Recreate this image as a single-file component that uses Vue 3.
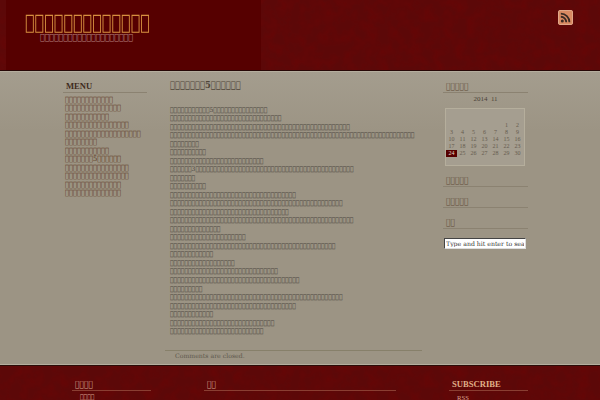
<script setup>
const B = '\uE000'
const box = (n) => B.repeat(n)
const mix = (...parts) => parts.map((p) => (typeof p === 'number' ? box(p) : p)).join('')

const menu = [12, 14, 11, 16, 19, 8, 11, [7, '5', 6], 16, 16, 14, 14].map((m) =>
  Array.isArray(m) ? mix(...m) : box(m)
)
const lines = [
  [11, '5', 15], [31], [50], [68], [8], [10], [26], [6, '3', 44], [7], [10], [35],
  [48], [33], [51], [14], [21], [46], [12], [18], [30], [36], [9], [48], [35], [12], [29], [26]
].map((l) => mix(...l))
const days = ['', '', '', '', '', '1', '2', '3', '4', '5', '6', '7', '8', '9', '10', '11', '12', '13', '14', '15', '16', '17', '18', '19', '20', '21', '22', '23', '24', '25', '26', '27', '28', '29', '30']
</script>

<template>
  <div class="page">
    <header class="top">
      <div class="brand">
        <h1>{{ box(13) }}</h1>
        <p>{{ box(20) }}</p>
      </div>
      <a class="rss" aria-label="RSS">
        <svg viewBox="0 0 16 16" width="15" height="15">
          <rect x="0.5" y="0.5" width="15" height="15" rx="1.5" fill="#d98a62" stroke="#e8b090" />
          <circle cx="4.6" cy="11.6" r="1.6" fill="#3a2a24" />
          <path d="M3 7.2a5.8 5.8 0 0 1 5.8 5.8M3 3.8A9.2 9.2 0 0 1 12.2 13" fill="none" stroke="#3a2a24" stroke-width="1.9" />
        </svg>
      </a>
    </header>

    <main class="body">
      <aside class="left">
        <h3 class="menu-head">MENU</h3>
        <ul>
          <li v-for="(m, i) in menu" :key="i">{{ m }}</li>
        </ul>
      </aside>

      <article class="post">
        <h2>{{ mix(7, '5', 6) }}</h2>
        <div class="copy">
          <div v-for="(l, i) in lines" :key="i">{{ l }}</div>
        </div>
        <p class="closed">Comments are closed.</p>
      </article>

      <aside class="right">
        <h3 class="side-head">{{ box(5) }}</h3>
        <div class="cal-title">2014&nbsp;&nbsp;11</div>
        <div class="cal">
          <span v-for="(d, i) in days" :key="i" :class="{ today: d === '24' }">{{ d }}</span>
        </div>
        <h3 class="side-head next">{{ box(5) }}</h3>
        <h3 class="side-head next">{{ box(5) }}</h3>
        <h3 class="side-head next">{{ box(2) }}</h3>
        <input class="search" value="Type and hit enter to search" />
      </aside>
    </main>

    <footer class="bottom">
      <section class="f1">
        <h4>{{ box(4) }}</h4>
        <div class="item">{{ box(4) }}</div>
      </section>
      <section class="f2">
        <h4>{{ box(2) }}</h4>
      </section>
      <section class="f3">
        <h4>SUBSCRIBE</h4>
        <div class="item">RSS</div>
      </section>
    </footer>
  </div>
</template>

<style>
html, body { margin: 0; background: #9c9484; }
</style>

<style scoped>
.page {
  width: 600px;
  height: 400px;
  overflow: hidden;
  display: flex;
  flex-direction: column;
  background: #9c9484;
  font-family: "DejaVu Serif Condensed", "DejaVu Serif", serif;
  font-stretch: condensed;
}
.top, .bottom {
  background-color: #5c0808;
  background-image: url("data:image/svg+xml,%3Csvg xmlns='http://www.w3.org/2000/svg' width='600' height='120'%3E%3Cfilter id='n'%3E%3CfeTurbulence type='fractalNoise' baseFrequency='0.09' numOctaves='3' seed='4'/%3E%3CfeColorMatrix values='0 0 0 0 0.2 0 0 0 0 0 0 0 0 0 0 0 0 0 0.55 -0.2'/%3E%3C/filter%3E%3Crect width='600' height='120' filter='url(%23n)'/%3E%3C/svg%3E");
}
.top {
  height: 71px;
  box-sizing: border-box;
  flex: none;
  display: flex;
  justify-content: space-between;
  border-bottom: 1px solid #260806;
  box-shadow: 0 1px 0 #b5ae9e;
  z-index: 1;
}
.brand {
  width: 255px;
  margin-left: 6px;
  background: #560000;
  padding: 12px 0 0 19px;
  box-sizing: border-box;
}
.brand h1 {
  margin: 0;
  font-size: 17.8px;
  font-weight: 400;
  line-height: 20px;
  color: #d68f3f;
  transform: scaleY(1.15);
}
.brand p {
  margin: 1px 0 0 15px;
  font-size: 8.6px;
  line-height: 9px;
  color: #b58580;
}
.rss {
  margin: 10px 27px 0 0;
  width: 15px;
  height: 15px;
}
.rss svg { display: block; }
.body {
  flex: 1;
  min-height: 0;
  display: flex;
  background: #9c9484;
  background-image: linear-gradient(#a49d8e, #9c9484 60px);
}
.left {
  width: 84px;
  margin-left: 63px;
  padding-top: 9px;
}
.menu-head {
  margin: 0;
  padding: 0 0 0 3px;
  font-family: "Liberation Serif", serif;
  font-stretch: normal;
  font-size: 8.6px;
  line-height: 12px;
  font-weight: 700;
  color: #3f2a1c;
  border-bottom: 1px solid #8b8271;
}
.left ul {
  list-style: none;
  margin: 2.7px 0 0 2px;
  padding: 0;
  font-size: 7.4px;
  line-height: 8.52px;
  color: #5a351c;
}
.post {
  width: 257px;
  margin-left: 18px;
  display: flex;
  flex-direction: column;
}
.post h2 {
  margin: 7.5px 0 0 5px;
  font-size: 9.26px;
  line-height: 12px;
  font-weight: 700;
  color: #4e4538;
}
.copy {
  margin: 15.2px 0 0 5px;
  font-size: 6.67px;
  line-height: 8.52px;
  color: #4c473f;
  white-space: nowrap;
}
.closed {
  margin: 14px 0 0 0;
  padding: 0 0 0 10px;
  border-top: 1px solid #87806a;
  font-family: "DejaVu Serif", serif;
  font-stretch: normal;
  font-size: 6.2px;
  line-height: 9px;
  color: #5e584d;
}
.right {
  width: 85px;
  margin-left: 21px;
  padding-top: 9px;
}
.side-head {
  margin: 0;
  padding: 0 0 0 3px;
  font-size: 8.33px;
  line-height: 12px;
  font-weight: 400;
  color: #5e4a36;
  border-bottom: 1px solid #8b8271;
}
.next { margin-top: 8px; }
.cal-title {
  text-align: center;
  font-family: "Liberation Serif", serif;
  font-stretch: normal;
  font-size: 7px;
  line-height: 12px;
  color: #4a4238;
  margin: 0 0 3px;
}
.cal {
  margin-left: 2px;
  width: 80px;
  height: 58px;
  box-sizing: border-box;
  border: 1px solid #b5ae9c;
  background: #a59e90;
  padding: 12.5px 0 0;
  display: grid;
  grid-template-columns: repeat(7, 11px);
  grid-auto-rows: 7px;
  font-family: "Liberation Serif", serif;
  font-stretch: normal;
  font-size: 6px;
  line-height: 7px;
  text-align: center;
  color: #665c4e;
}
.today {
  background: #560000;
  color: #e8d8c8;
}
.search {
  display: block;
  margin: 9px 0 0 1px;
  width: 82px;
  height: 11px;
  box-sizing: border-box;
  padding: 0 1px;
  border: 1px solid #ddd;
  border-top-color: #444;
  border-left-color: #444;
  background: #fff;
  color: #333;
  font-family: "DejaVu Serif", serif;
  font-stretch: normal;
  font-size: 6.2px;
  outline: none;
}
.bottom {
  height: 35px;
  flex: none;
  box-sizing: border-box;
  border-top: 1px solid #2b0c08;
  box-shadow: 0 -1px 0 #b5ae9e;
  display: flex;
  color: #d8a585;
}
.bottom h4 {
  margin: 0;
  padding: 12px 0 0 3px;
  font-size: 8.33px;
  line-height: 12px;
  font-weight: 400;
  color: #d8a898;
  border-bottom: 1px solid #8a3e32;
}
.bottom .item {
  font-size: 6.67px;
  line-height: 9px;
  margin: 2px 0 0 8px;
  color: #d8a090;
}
.f1 { width: 79px; margin-left: 72px; }
.f2 { width: 192px; margin-left: 53px; }
.f3 { width: 79px; margin-left: 53px; }
.f3 h4 {
  font-family: "Liberation Serif", serif;
  font-stretch: normal;
  font-weight: 700;
  font-size: 8.6px;
  color: #e0b088;
}
.f3 .item { font-family: "Liberation Serif", serif; font-stretch: normal; }
</style>
